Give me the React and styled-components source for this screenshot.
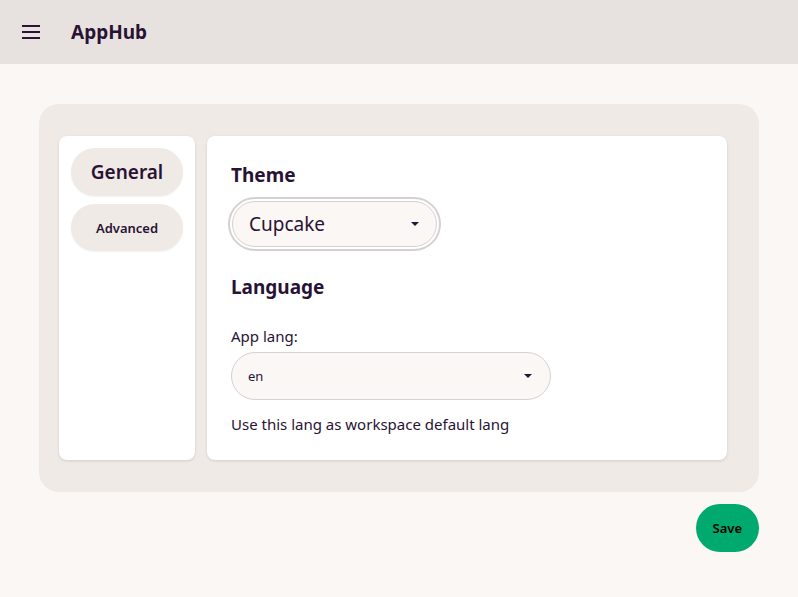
import React from 'react';
import styled, { createGlobalStyle } from 'styled-components';

const GlobalStyle = createGlobalStyle`
	html, body {
		margin: 0;
		padding: 0;
		background: #faf7f5;
		color: #291334;
		font-family: 'Noto Sans', 'Open Sans', sans-serif;
	}
	* { box-sizing: border-box; }
`;

const Header = styled.header`
	height: 64px;
	background: #e7e2df;
	display: flex;
	align-items: center;
	padding: 0 22px;
	gap: 31px;
`;

const MenuButton = styled.button`
	border: none;
	background: none;
	padding: 0;
	width: 18px;
	height: 18px;
	display: flex;
	align-items: center;
	color: #291334;
	cursor: pointer;
`;

const Brand = styled.h1`
	margin: 0;
	font-size: 19px;
	font-weight: 700;
`;

const Main = styled.main`
	padding: 40px 39px 0;
	display: flex;
	flex-direction: column;
	gap: 12px;
`;

const Panel = styled.section`
	background: #efeae6;
	border-radius: 20px;
	padding: 32px 32px 32px 20px;
	display: flex;
	gap: 12px;
`;

const Sidebar = styled.nav`
	width: 136px;
	height: 324px;
	background: #fff;
	border-radius: 8px;
	box-shadow: 0 1px 3px rgba(0, 0, 0, 0.12);
	padding: 12px;
	display: flex;
	flex-direction: column;
	gap: 8px;
`;

const Tab = styled.button`
	height: ${p => (p.$active ? 48 : 47)}px;
	border: none;
	border-radius: 999px;
	background: #efeae6;
	color: #291334;
	font-family: inherit;
	font-weight: 600;
	font-size: ${p => (p.$active ? '19px' : '13px')};
	box-shadow: 0 1px 2px rgba(0, 0, 0, 0.06);
	cursor: pointer;
`;

const Content = styled.div`
	width: 520px;
	background: #fff;
	border-radius: 8px;
	box-shadow: 0 1px 3px rgba(0, 0, 0, 0.12);
	padding: 24px;
	display: flex;
	flex-direction: column;
`;

const Heading = styled.h2`
	margin: 0;
	font-size: 19px;
	font-weight: 700;
	line-height: 30px;
`;

const SelectBox = styled.div`
	position: relative;
	width: ${p => p.$width}px;
	height: ${p => p.$height}px;
	margin-top: ${p => p.$top}px;
	margin-left: ${p => p.$left || 0}px;
	border-radius: 999px;
	background: #faf7f5;
	border: 1px solid #d6d0d4;
	display: flex;
	align-items: center;
	padding: 0 16px;
	font-size: ${p => p.$size}px;
	${p => p.$focus && `
		outline: 2px solid #d6d0d4;
		outline-offset: 2px;
	`}
`;

const Caret = styled.span`
	position: absolute;
	right: ${p => p.$right}px;
	top: 50%;
	margin-top: -2px;
	width: 0;
	height: 0;
	border-left: 4px solid transparent;
	border-right: 4px solid transparent;
	border-top: 4px solid #291334;
`;

const Label = styled.div`
	font-size: 15px;
	line-height: 24px;
	margin-top: ${p => p.$top}px;
`;

const Section = styled.div`
	margin-top: ${p => p.$top}px;
`;

const Footer = styled.div`
	display: flex;
	justify-content: flex-end;
`;

const SaveButton = styled.button`
	height: 48px;
	padding: 0 17px;
	border: none;
	border-radius: 999px;
	background: #00a96e;
	color: #000;
	font-family: inherit;
	font-weight: 600;
	font-size: 13px;
	cursor: pointer;
`;

export default function App() {
	return (
		<>
			<GlobalStyle />
			<Header>
				<MenuButton aria-label="menu">
					<svg width="18" height="14" viewBox="0 0 18 14">
						<path d="M0 1h18M0 7h18M0 13h18" stroke="#291334" strokeWidth="2" />
					</svg>
				</MenuButton>
				<Brand>AppHub</Brand>
			</Header>
			<Main>
				<Panel>
					<Sidebar>
						<Tab $active>General</Tab>
						<Tab>Advanced</Tab>
					</Sidebar>
					<Content>
						<Heading>Theme</Heading>
						<SelectBox $width={205} $height={46} $top={11} $left={1} $size={19} $focus>
							Cupcake
							<Caret $right={17} />
						</SelectBox>
						<Section $top={25}>
							<Heading>Language</Heading>
						</Section>
						<Label $top={22}>App lang:</Label>
						<SelectBox $width={320} $height={48} $top={4} $size={13}>
							en
							<Caret $right={18} />
						</SelectBox>
						<Label $top={12}>Use this lang as workspace default lang</Label>
					</Content>
				</Panel>
				<Footer>
					<SaveButton>Save</SaveButton>
				</Footer>
			</Main>
		</>
	);
}
